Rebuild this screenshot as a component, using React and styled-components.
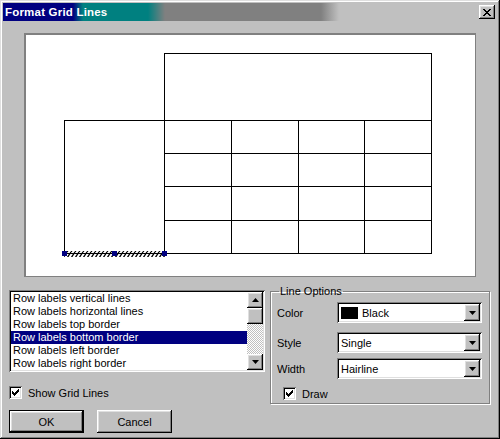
import React from 'react';
import styled, { createGlobalStyle, css } from 'styled-components';

const GlobalStyle = createGlobalStyle`
    html, body {
        margin: 0;
        padding: 0;
        background: #c0c0c0;
    }
    body {
        font-family: "Liberation Sans", Arial, sans-serif;
        font-size: 11px;
        color: #000;
    }
`;

const raised = css`
    background: #c0c0c0;
    box-shadow: inset -1px -1px #000, inset 1px 1px #fff,
        inset -2px -2px #808080, inset 2px 2px #dfdfdf;
`;

const sunken = css`
    background: #fff;
    box-shadow: inset 1px 1px #808080, inset -1px -1px #fff,
        inset 2px 2px #000, inset -2px -2px #dfdfdf;
`;

const Window = styled.div`
    width: 500px;
    height: 439px;
    box-sizing: border-box;
    padding: 3px;
    background: #c0c0c0;
    box-shadow: inset -1px -1px #000, inset 1px 1px #dfdfdf,
        inset -2px -2px #808080, inset 2px 2px #fff;
    display: flex;
    flex-direction: column;
`;

const TitleBar = styled.div`
    height: 18px;
    display: flex;
    align-items: center;
    justify-content: space-between;
    padding: 0 2px;
    background: linear-gradient(90deg,
        #000080 0 70px, #008080 80px 145px,
        #808080 162px 318px, #c0c0c0 336px);
`;

const TitleText = styled.span`
    color: #fff;
    font-weight: bold;
    font-size: 11.5px;
    letter-spacing: 0.2px;
`;

const CloseButton = styled.div`
    ${raised};
    width: 16px;
    height: 14px;
    display: flex;
    align-items: center;
    justify-content: center;
`;

const Body = styled.div`
    flex: 1;
    display: flex;
    flex-direction: column;
    padding: 12px 7px 0 6px;
`;

const Preview = styled.div`
    height: 244px;
    margin: 0 14px 0 15px;
    box-sizing: border-box;
    background: #fff;
    border: solid #808080;
    border-width: 2px 1px 1px 2px;
    svg {
        display: block;
    }
`;

const BottomRow = styled.div`
    display: flex;
    gap: 5px;
    margin-top: 13px;
`;

const LeftColumn = styled.div`
    width: 256px;
    display: flex;
    flex-direction: column;
`;

const ListBox = styled.div`
    ${sunken};
    height: 82px;
    box-sizing: border-box;
    padding: 2px;
    display: flex;
`;

const ListItems = styled.div`
    flex: 1;
`;

const ListItem = styled.div`
    height: 13px;
    line-height: 13px;
    padding-left: 2px;
    white-space: nowrap;
    background: ${p => (p.$selected ? '#000080' : 'transparent')};
    color: ${p => (p.$selected ? '#fff' : '#000')};
`;

const ScrollBar = styled.div`
    width: 16px;
    display: flex;
    flex-direction: column;
`;

const ScrollButton = styled.div`
    ${raised};
    height: 16px;
    display: flex;
    align-items: center;
    justify-content: center;
`;

const ScrollTrack = styled.div`
    flex: 1;
    background: repeating-conic-gradient(#c0c0c0 0 25%, #fff 0 50%) 0 0 / 2px 2px;
`;

const CheckRow = styled.label`
    display: flex;
    align-items: center;
    gap: 6px;
    margin-top: ${p => p.$mt || 0}px;
    margin-left: ${p => p.$ml || 0}px;
`;

const CheckBox = styled.span`
    ${sunken};
    width: 13px;
    height: 13px;
    display: flex;
    align-items: center;
    justify-content: center;
`;

const ButtonRow = styled.div`
    display: flex;
    gap: 13px;
    margin-top: 11px;
`;

const PushButton = styled.div`
    ${raised};
    width: 75px;
    height: 23px;
    box-sizing: border-box;
    display: flex;
    align-items: center;
    justify-content: center;
    ${p => p.$default && css`
        border: 1px solid #000;
    `}
`;

const GroupBox = styled.fieldset`
    flex: 1;
    margin: -4px 0 0 0;
    padding: 0 7px 4px 6px;
    height: 118px;
    box-sizing: border-box;
    border: 1px solid #808080;
    box-shadow: 1px 1px 0 #fff, inset 1px 1px 0 #fff;
    display: flex;
    flex-direction: column;
`;

const Legend = styled.legend`
    padding: 0 1px;
    margin-left: 2px;
    line-height: 11px;
`;

const OptionRow = styled.div`
    display: flex;
    align-items: center;
    margin-top: ${p => p.$mt}px;
`;

const OptionLabel = styled.span`
    width: 60px;
`;

const Combo = styled.div`
    ${sunken};
    flex: 1;
    height: 21px;
    box-sizing: border-box;
    padding: 2px;
    display: flex;
    align-items: center;
`;

const ComboValue = styled.div`
    flex: 1;
    display: flex;
    align-items: center;
    gap: 4px;
    padding-left: 2px;
`;

const Swatch = styled.span`
    width: 17px;
    height: 12px;
    background: #000;
`;

const DropButton = styled(ScrollButton)`
    width: 16px;
    height: 17px;
`;

const Arrow = ({ up }) => (
    <svg width="7" height="4" viewBox="0 0 7 4">
        <polygon points={up ? '3.5,0 7,4 0,4' : '0,0 7,0 3.5,4'} fill="#000" />
    </svg>
);

const Check = () => (
    <svg width="7" height="7" viewBox="0 0 7 7" shapeRendering="crispEdges">
        <path d="M0 2h1v1h1v1h1v-1h1v-1h1v-1h1v-1h1v3h-1v1h-1v1h-1v1h-1v1h-1v-1h-1v-1h-1z" fill="#000" />
    </svg>
);

const CloseGlyph = () => (
    <svg width="8" height="7" viewBox="0 0 8 7" shapeRendering="crispEdges">
        <path d="M0 0h2v1h1v1h2v-1h1v-1h2v1h-1v1h-1v1h-1v1h1v1h1v1h1v1h-2v-1h-1v-1h-2v1h-1v1h-2v-1h1v-1h1v-1h1v-1h-1v-1h-1v-1h-1z" fill="#000" />
    </svg>
);

// page coordinates of the sample table, shifted into the panel
const cols = [164, 231, 298, 364, 431];
const rows = [120, 153, 186, 220, 253];

function GridPreview() {
    return (
        <svg width="449" height="241" shapeRendering="crispEdges">
            <defs>
                <pattern id="hatch" width="4" height="6" patternUnits="userSpaceOnUse">
                    <path d="M-1 6L3 0M3 6L7 0" stroke="#000" strokeWidth="1.3" shapeRendering="auto" />
                </pattern>
            </defs>
            <g transform="translate(-26,-35)" stroke="#000" strokeWidth="1" fill="none">
                <rect x="164.5" y="53.5" width="267" height="67" />
                <path d="M64.5 253V120.5H164.5" />
                {cols.map(x => (
                    <line key={x} x1={x + 0.5} y1="120" x2={x + 0.5} y2="254" />
                ))}
                {rows.map(y => (
                    <line key={y} x1="164" y1={y + 0.5} x2="432" y2={y + 0.5} />
                ))}
                <line x1="64" y1="253.5" x2="165" y2="253.5" />
                <rect x="64" y="251" width="101" height="6" fill="url(#hatch)" stroke="none" />
                {[64, 114, 164].map(x => (
                    <rect key={x} x={x - 2} y="251" width="5" height="5" fill="#000080" stroke="none" />
                ))}
            </g>
        </svg>
    );
}

const items = [
    'Row labels vertical lines',
    'Row labels horizontal lines',
    'Row labels top border',
    'Row labels bottom border',
    'Row labels left border',
    'Row labels right border',
];

export default function App() {
    return (
        <>
            <GlobalStyle />
            <Window>
                <TitleBar>
                    <TitleText>Format Grid Lines</TitleText>
                    <CloseButton><CloseGlyph /></CloseButton>
                </TitleBar>
                <Body>
                    <Preview>
                        <GridPreview />
                    </Preview>
                    <BottomRow>
                        <LeftColumn>
                            <ListBox>
                                <ListItems>
                                    {items.map((t, i) => (
                                        <ListItem key={t} $selected={i === 3}>{t}</ListItem>
                                    ))}
                                </ListItems>
                                <ScrollBar>
                                    <ScrollButton><Arrow up /></ScrollButton>
                                    <ScrollButton />
                                    <ScrollTrack />
                                    <ScrollButton><Arrow /></ScrollButton>
                                </ScrollBar>
                            </ListBox>
                            <CheckRow $mt={14}>
                                <CheckBox><Check /></CheckBox>
                                Show Grid Lines
                            </CheckRow>
                            <ButtonRow>
                                <PushButton $default>OK</PushButton>
                                <PushButton>Cancel</PushButton>
                            </ButtonRow>
                        </LeftColumn>
                        <GroupBox>
                            <Legend>Line Options</Legend>
                            <OptionRow $mt={5}>
                                <OptionLabel>Color</OptionLabel>
                                <Combo>
                                    <ComboValue><Swatch />Black</ComboValue>
                                    <DropButton><Arrow /></DropButton>
                                </Combo>
                            </OptionRow>
                            <OptionRow $mt={9}>
                                <OptionLabel>Style</OptionLabel>
                                <Combo>
                                    <ComboValue>Single</ComboValue>
                                    <DropButton><Arrow /></DropButton>
                                </Combo>
                            </OptionRow>
                            <OptionRow $mt={5}>
                                <OptionLabel>Width</OptionLabel>
                                <Combo>
                                    <ComboValue>Hairline</ComboValue>
                                    <DropButton><Arrow /></DropButton>
                                </Combo>
                            </OptionRow>
                            <CheckRow $mt={8} $ml={6}>
                                <CheckBox><Check /></CheckBox>
                                Draw
                            </CheckRow>
                        </GroupBox>
                    </BottomRow>
                </Body>
            </Window>
        </>
    );
}
